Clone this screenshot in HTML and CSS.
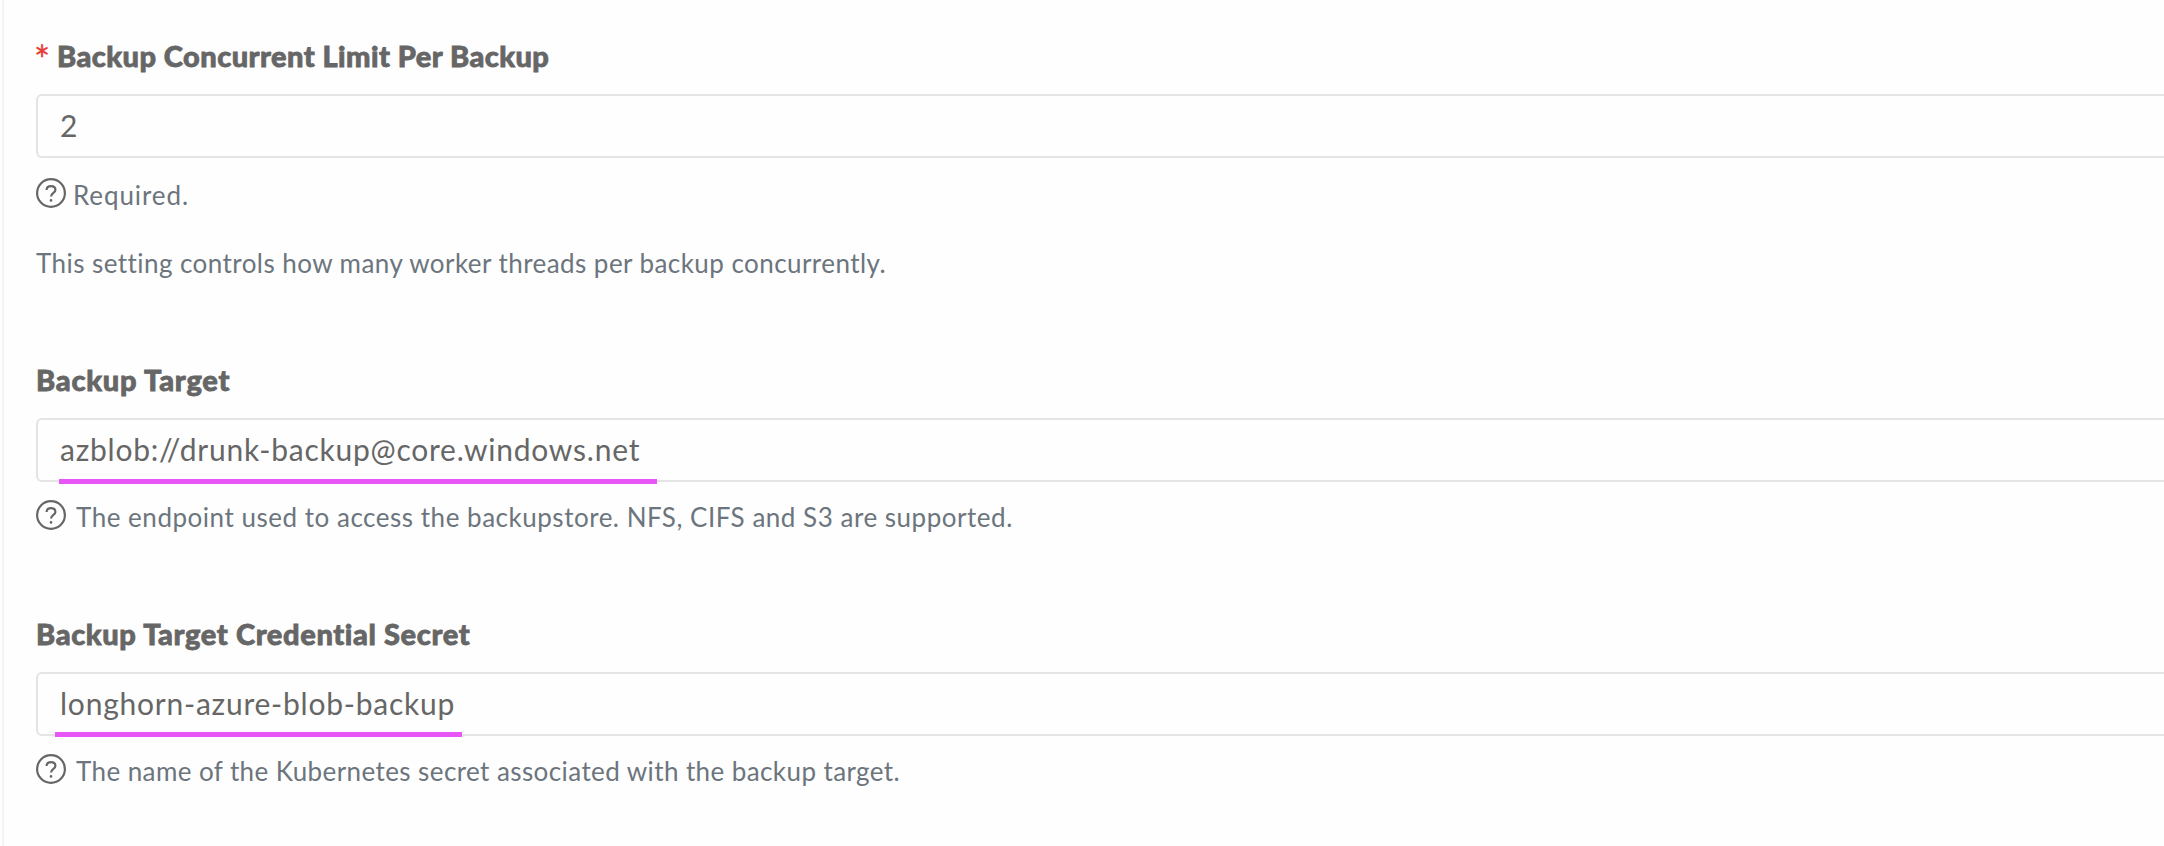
FILE: index.html
```
<!DOCTYPE html>
<html lang="en">
<head>
<meta charset="utf-8">
<title>Settings</title>
<link rel="stylesheet" href="styles.css">
</head>
<body>
<main class="panel">
  <section class="field field-limit">
    <div class="label"><span class="required">*</span><span class="label-limit">Backup Concurrent Limit Per Backup</span></div>
    <div class="input"><span>2</span></div>
    <div class="help help-tight">
      <svg class="icon" viewBox="0 0 30 30"><circle cx="15" cy="15" r="13.9"/><path d="M10.6 12.1C10.6 9.6 12.5 8.2 15 8.2C17.5 8.2 19.4 9.6 19.4 11.9C19.4 14.8 15 15 15 18.6"/><circle class="dot" cx="15" cy="22.4" r="1.3"/></svg>
      <span class="help-required">Required.</span>
    </div>
    <p class="description">This setting controls how many worker threads per backup concurrently.</p>
  </section>
  <section class="field">
    <div class="label"><span class="label-target">Backup Target</span></div>
    <div class="input"><span>azblob://drunk-backup@core.windows.net</span><i class="mark mark-target"></i></div>
    <div class="help">
      <svg class="icon" viewBox="0 0 30 30"><circle cx="15" cy="15" r="13.9"/><path d="M10.6 12.1C10.6 9.6 12.5 8.2 15 8.2C17.5 8.2 19.4 9.6 19.4 11.9C19.4 14.8 15 15 15 18.6"/><circle class="dot" cx="15" cy="22.4" r="1.3"/></svg>
      <span class="help-target">The endpoint used to access the backupstore. NFS, CIFS and S3 are supported.</span>
    </div>
  </section>
  <section class="field">
    <div class="label"><span class="label-secret">Backup Target Credential Secret</span></div>
    <div class="input"><span>longhorn-azure-blob-backup</span><i class="mark mark-secret"></i></div>
    <div class="help">
      <svg class="icon" viewBox="0 0 30 30"><circle cx="15" cy="15" r="13.9"/><path d="M10.6 12.1C10.6 9.6 12.5 8.2 15 8.2C17.5 8.2 19.4 9.6 19.4 11.9C19.4 14.8 15 15 15 18.6"/><circle class="dot" cx="15" cy="22.4" r="1.3"/></svg>
      <span class="help-secret">The name of the Kubernetes secret associated with the backup target.</span>
    </div>
  </section>
</main>
</body>
</html>
```
FILE: styles.css
```
* { box-sizing: border-box; }
body {
  margin: 0;
  background: #fefefe;
  color: #666;
  font-family: Lato, "Open Sans", sans-serif;
  overflow: hidden;
}
.panel {
  height: 846px;
  margin-left: 2px;
  padding: 35px 0 0 32px;
  border-left: 2px solid #f4f4f4;
}
.field { height: 254px; }
.field-limit { height: 324px; }
.label {
  display: flex;
  height: 40px;
  line-height: 42px;
  margin-bottom: 19px;
  font-size: 29px;
  font-weight: 900;
  white-space: nowrap;
  -webkit-text-stroke: 0.8px #666;
}
.label-limit { letter-spacing: 0.46px; }
.label-target { letter-spacing: 0.77px; }
.label-secret { letter-spacing: 0.63px; }
.required {
  width: 21px;
  margin-left: -2px;
  margin-right: 2px;
  color: #e53935;
  font-size: 38px;
  font-weight: 400;
  line-height: 49px;
  -webkit-text-stroke: 0.3px #e53935;
}
.input {
  position: relative;
  height: 64px;
  padding-left: 22px;
  border: 2px solid #e4e4e4;
  border-right: 0;
  border-radius: 6px 0 0 6px;
  font-size: 30px;
  letter-spacing: 0.77px;
  line-height: 58px;
  white-space: nowrap;
}
.help {
  display: flex;
  gap: 10px;
  height: 32px;
  margin-top: 18px;
  color: #6c757d;
  font-size: 26px;
  line-height: 34px;
  white-space: nowrap;
}
.help-tight { gap: 7px; margin-top: 20px; }
.help-required { letter-spacing: 0.9px; }
.help-target { letter-spacing: 0.52px; }
.help-secret { letter-spacing: 0.41px; }
.icon { width: 30px; height: 30px; fill: none; stroke: #666; stroke-width: 2.2; }
.icon .dot { fill: #666; stroke: none; }
.description {
  margin: 36px 0 0;
  color: #6c757d;
  font-size: 26px;
  letter-spacing: 0.44px;
  line-height: 34px;
}
.mark { position: absolute; height: 5px; background: #e856f8; }
.mark-target { left: 21px; top: 59px; width: 598px; }
.mark-secret { left: 17px; top: 58px; width: 407px; }
```
